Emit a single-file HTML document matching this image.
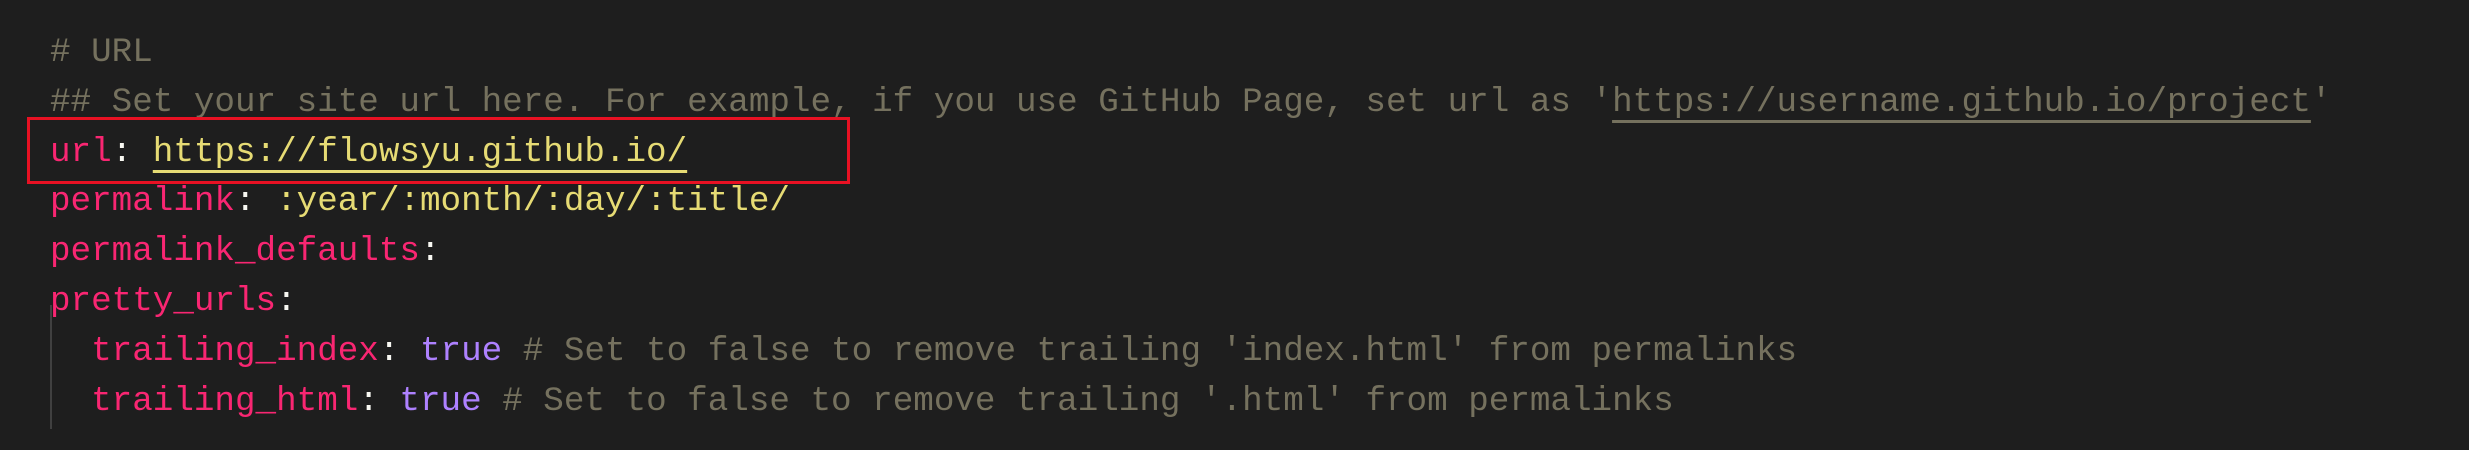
<!DOCTYPE html>
<html><head><meta charset="utf-8"><style>
html,body{margin:0;padding:0;background:#1e1e1e;width:2469px;height:450px;overflow:hidden}
.code{position:absolute;left:50px;top:28px;font-family:"Liberation Mono",monospace;font-size:34.25px;line-height:49.8px;white-space:pre;color:#f8f8f2}
.c{color:#75715e}.k{color:#f92672}.s{color:#e6db74}.b{color:#ae81ff}
.u{text-decoration:underline;text-decoration-thickness:3px;text-underline-offset:9px}
.box{position:absolute;left:27px;top:117px;width:817px;height:61px;border:3px solid #e81123}
.guide{position:absolute;left:50px;top:305px;width:2px;height:124px;background:#404040}
</style></head><body>
<div class="guide"></div>
<div class="code"><span class="c"># URL</span>
<span class="c">## Set your site url here. For example, if you use GitHub Page, set url as '<span class="u">https://username.github.io/project</span>'</span>
<span class="k">url</span>: <span class="s u">https://flowsyu.github.io/</span>
<span class="k">permalink</span>: <span class="s">:year/:month/:day/:title/</span>
<span class="k">permalink_defaults</span>:
<span class="k">pretty_urls</span>:
  <span class="k">trailing_index</span>: <span class="b">true</span> <span class="c"># Set to false to remove trailing 'index.html' from permalinks</span>
  <span class="k">trailing_html</span>: <span class="b">true</span> <span class="c"># Set to false to remove trailing '.html' from permalinks</span></div>
<div class="box"></div>
</body></html>
